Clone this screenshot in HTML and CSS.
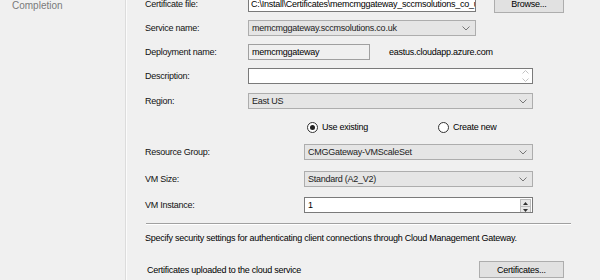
FILE: index.html
```html
<!DOCTYPE html>
<html lang="en">
<head>
    <meta charset="UTF-8">
    <title>Cloud Management Gateway</title>
    <link rel="stylesheet" href="styles.css">
</head>
<body>
<div class="page">

    <!-- Wizard steps -->
    <aside class="steps">
        <span class="step">Completion</span>
    </aside>

    <!-- Settings form -->
    <main class="form">
        <div class="row row-cert">
            <label class="lbl">Certificate file:</label>
            <div class="box cert">C:\Install\Certificates\memcmggateway_sccmsolutions_co_uk.pfx</div>
            <button class="btn browse">Browse...</button>
        </div>

        <div class="row row-service">
            <label class="lbl">Service name:</label>
            <div class="combo service">memcmggateway.sccmsolutions.co.uk
                <svg class="chev" width="8" height="5" viewBox="0 0 8 5"><path d="M0.5 0.5 L4 4 L7.5 0.5" fill="none" stroke="#777"/></svg>
            </div>
        </div>

        <div class="row row-deploy">
            <label class="lbl">Deployment name:</label>
            <div class="box readonly deploy">memcmggateway</div>
            <span class="suffix">eastus.cloudapp.azure.com</span>
        </div>

        <div class="row row-desc">
            <label class="lbl">Description:</label>
            <div class="box wide desc">
                <span class="scroll">
                    <svg width="7" height="4" viewBox="0 0 7 4"><path d="M0.5 3.5 L3.5 0.5 L6.5 3.5" fill="none" stroke="#c2c2c2"/></svg>
                    <svg width="7" height="4" viewBox="0 0 7 4"><path d="M0.5 0.5 L3.5 3.5 L6.5 0.5" fill="none" stroke="#c2c2c2"/></svg>
                </span>
            </div>
        </div>

        <div class="row row-region">
            <label class="lbl">Region:</label>
            <div class="combo wide">East US
                <svg class="chev" width="8" height="5" viewBox="0 0 8 5"><path d="M0.5 0.5 L4 4 L7.5 0.5" fill="none" stroke="#777"/></svg>
            </div>
        </div>

        <div class="row row-radio">
            <span class="radio checked"></span><span class="radio-lbl">Use existing</span>
            <span class="radio second"></span><span class="radio-lbl">Create new</span>
        </div>

        <div class="row row-rg">
            <label class="lbl lbl-long">Resource Group:</label>
            <div class="combo narrow">CMGGateway-VMScaleSet
                <svg class="chev" width="8" height="5" viewBox="0 0 8 5"><path d="M0.5 0.5 L4 4 L7.5 0.5" fill="none" stroke="#777"/></svg>
            </div>
        </div>

        <div class="row row-size">
            <label class="lbl lbl-long">VM Size:</label>
            <div class="combo narrow">Standard (A2_V2)
                <svg class="chev" width="8" height="5" viewBox="0 0 8 5"><path d="M0.5 0.5 L4 4 L7.5 0.5" fill="none" stroke="#777"/></svg>
            </div>
        </div>

        <div class="row row-inst">
            <label class="lbl lbl-long">VM Instance:</label>
            <div class="box narrow inst">1
                <span class="spin">
                    <span class="spin-btn"><svg width="5" height="3" viewBox="0 0 5 3"><path d="M0 3 L2.5 0 L5 3 Z" fill="#333"/></svg></span>
                    <span class="spin-btn"><svg width="5" height="3" viewBox="0 0 5 3"><path d="M0 0 L2.5 3 L5 0 Z" fill="#333"/></svg></span>
                </span>
            </div>
        </div>

        <hr class="sep">

        <p class="note">Specify security settings for authenticating client connections through Cloud Management Gateway.</p>

        <div class="row row-certs">
            <span class="certs-lbl">Certificates uploaded to the cloud service</span>
            <button class="btn certs">Certificates...</button>
        </div>
    </main>

</div>
</body>
</html>
```

FILE: styles.css
```css
html, body {
    margin: 0;
    padding: 0;
    background: #f0f0f0;
    overflow: hidden;
}
body {
    font-family: "Liberation Sans", Arial, sans-serif;
    font-size: 9px;
    letter-spacing: -0.25px;
    color: #000;
}
.page {
    display: flex;
    width: 600px;
    height: 280px;
}
.steps {
    width: 126px;
    border-right: 1px solid #dcdcdc;
    box-shadow: 1px 0 0 #fbfbfb;
    padding: 0 0 0 12px;
    box-sizing: border-box;
    flex: none;
}
.step {
    display: block;
    margin-top: 1px;
    font-size: 10px;
    line-height: 10px;
    letter-spacing: 0;
    color: #7a7a7a;
}
.form {
    flex: 1;
    padding-left: 19px;
    margin-top: -4px;
}
.row {
    display: flex;
    align-items: center;
    height: 16px;
}
.lbl {
    width: 103px;
    flex: none;
    color: #111;
}
.lbl-long {
    width: 159px;
}
.box, .combo {
    position: relative;
    height: 16px;
    box-sizing: border-box;
    line-height: 14px;
    padding: 0 3px;
    white-space: nowrap;
    overflow: hidden;
    flex: none;
}
.box {
    background: #fff;
    border: 1px solid #7a7a7a;
}
.box.readonly {
    background: #f0f0f0;
    border-color: #a0a0a0;
}
.combo {
    background: #e5e5e5;
    border: 1px solid #adadad;
    color: #222;
}
.chev {
    position: absolute;
    right: 5px;
    top: 5px;
}
.cert {
    width: 228px;
    padding-left: 2px;
}
.service {
    width: 228px;
}
.deploy {
    width: 122px;
}
.wide {
    width: 285px;
}
.narrow {
    width: 229px;
}
.suffix {
    margin-left: 19px;
}
.btn {
    font: inherit;
    letter-spacing: -0.25px;
    color: #000;
    background: #e1e1e1;
    border: 1px solid #adadad;
    height: 17px;
    padding: 0;
    flex: none;
}
.browse {
    width: 70px;
    margin-left: 18px;
}
.row-service { margin-top: 8px; }
.row-deploy { margin-top: 8px; }
.row-desc { margin-top: 8px; }
.row-region { margin-top: 9px; }
.row-radio { margin-top: 11px; height: 14px; }
.row-rg { margin-top: 10px; }
.row-size { margin-top: 11px; }
.row-inst { margin-top: 10px; }

.scroll {
    position: absolute;
    right: 3px;
    top: 1px;
    display: flex;
    flex-direction: column;
    gap: 4px;
}
.spin {
    position: absolute;
    right: 1px;
    top: 1px;
    display: flex;
    flex-direction: column;
}
.spin-btn {
    width: 9px;
    height: 6px;
    background: #e8e8e8;
    border: 1px solid #bcbcbc;
    margin-bottom: -1px;
    display: flex;
    align-items: center;
    justify-content: center;
}
.radio {
    width: 11px;
    height: 11px;
    border: 1px solid #333;
    border-radius: 50%;
    background: #fff;
    box-sizing: border-box;
    position: relative;
    margin-left: 162px;
    flex: none;
}
.radio.checked::after {
    content: "";
    position: absolute;
    left: 2px;
    top: 2px;
    width: 5px;
    height: 5px;
    border-radius: 50%;
    background: #222;
}
.radio.second {
    margin-left: 70px;
}
.radio-lbl {
    margin-left: 4px;
}
.sep {
    width: 425px;
    margin: 10px 0 0 1px;
    border: 0;
    border-top: 1px solid #a0a0a0;
    border-bottom: 1px solid #fff;
    height: 0;
}
.note {
    margin: 7px 0 0 0;
    line-height: 12px;
}
.row-certs {
    margin-top: 17px;
    height: 17px;
}
.certs-lbl {
    margin-left: 2px;
    width: 332px;
}
.certs {
    width: 85px;
}
```
